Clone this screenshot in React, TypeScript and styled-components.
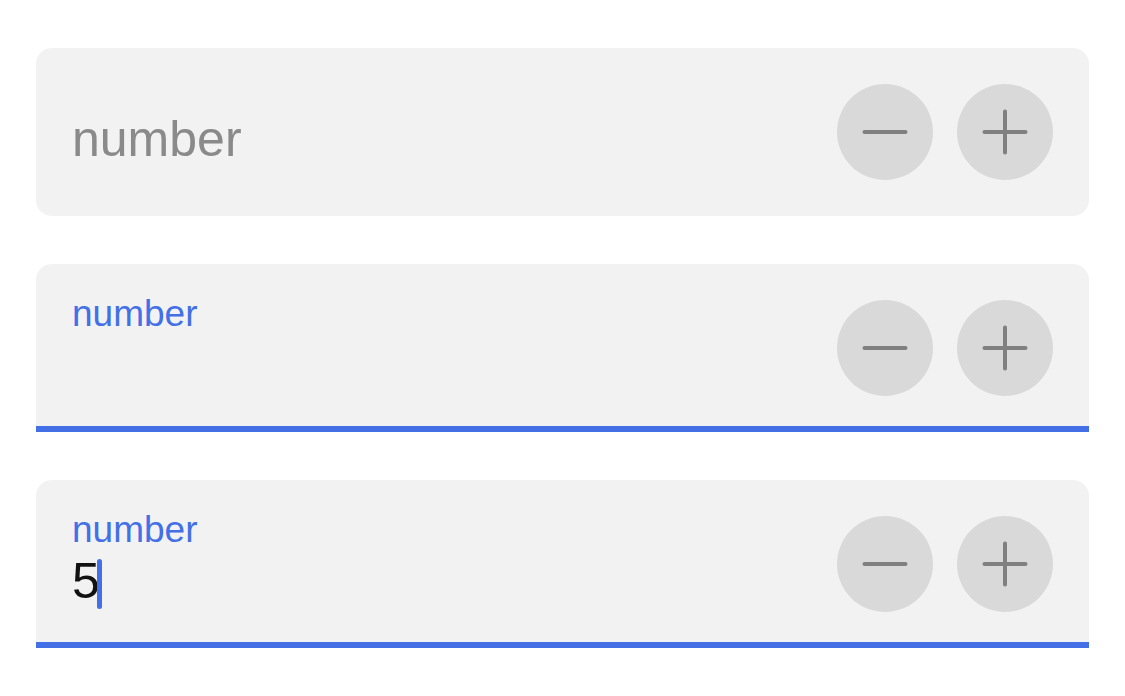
import React from "react";
import styled, { createGlobalStyle, css } from "styled-components";

const BLUE = "#4370e6";

const GlobalStyle = createGlobalStyle`
  html, body { margin: 0; padding: 0; background: #ffffff; }
  body { font-family: "Liberation Sans", Arial, Helvetica, sans-serif; overflow: hidden; }
  * { box-sizing: border-box; }
`;

const Page = styled.div`
  display: flex;
  flex-direction: column;
  gap: 48px;
  padding: 48px 36px;
  width: 1125px;
`;

const Card = styled.div<{ $focused?: boolean }>`
  display: flex;
  align-items: flex-start;
  height: 168px;
  padding: 0 36px;
  background: #f2f2f2;
  border-radius: 16px;
  ${(p) =>
    p.$focused &&
    css`
      border-radius: 16px 16px 0 0;
      border-bottom: 6px solid ${BLUE};
    `}
`;

const Field = styled.div<{ $top: number }>`
  flex: 1;
  display: flex;
  flex-direction: column;
  padding-top: ${(p) => p.$top}px;
`;

const Placeholder = styled.div`
  font-size: 50px;
  line-height: 50px;
  color: #8a8a8a;
`;

const Label = styled.div`
  font-size: 37px;
  line-height: 36px;
  color: ${BLUE};
`;

const ValueRow = styled.div`
  display: flex;
  align-items: flex-start;
  margin-top: 8px;
`;

const Value = styled.span`
  font-size: 50px;
  line-height: 50px;
  color: #111111;
`;

const Caret = styled.span`
  display: block;
  width: 5px;
  height: 50px;
  margin-top: 3px;
  margin-left: -3px;
  border-radius: 3px;
  background: ${BLUE};
`;

const Buttons = styled.div`
  display: flex;
  gap: 24px;
  margin-top: 36px;
`;

const RoundButton = styled.button`
  width: 96px;
  height: 96px;
  border-radius: 50%;
  border: none;
  padding: 0;
  background: #d9d9d9;
  display: flex;
  align-items: center;
  justify-content: center;
  cursor: pointer;
`;

const MinusIcon = () => (
  <svg width="48" height="48" viewBox="0 0 48 48">
    <path d="M3.5 24H44.5" stroke="#808080" strokeWidth="4" strokeLinecap="round" fill="none" />
  </svg>
);

const PlusIcon = () => (
  <svg width="48" height="48" viewBox="0 0 48 48">
    <path d="M3.5 24H44.5M24 3.5V44.5" stroke="#808080" strokeWidth="4" strokeLinecap="round" fill="none" />
  </svg>
);

const Stepper = () => (
  <Buttons>
    <RoundButton aria-label="decrement">
      <MinusIcon />
    </RoundButton>
    <RoundButton aria-label="increment">
      <PlusIcon />
    </RoundButton>
  </Buttons>
);

export default function App() {
  return (
    <>
      <GlobalStyle />
      <Page>
        <Card>
          <Field $top={66}>
            <Placeholder>number</Placeholder>
          </Field>
          <Stepper />
        </Card>
        <Card $focused>
          <Field $top={32}>
            <Label>number</Label>
          </Field>
          <Stepper />
        </Card>
        <Card $focused>
          <Field $top={32}>
            <Label>number</Label>
            <ValueRow>
              <Value>5</Value>
              <Caret />
            </ValueRow>
          </Field>
          <Stepper />
        </Card>
      </Page>
    </>
  );
}
